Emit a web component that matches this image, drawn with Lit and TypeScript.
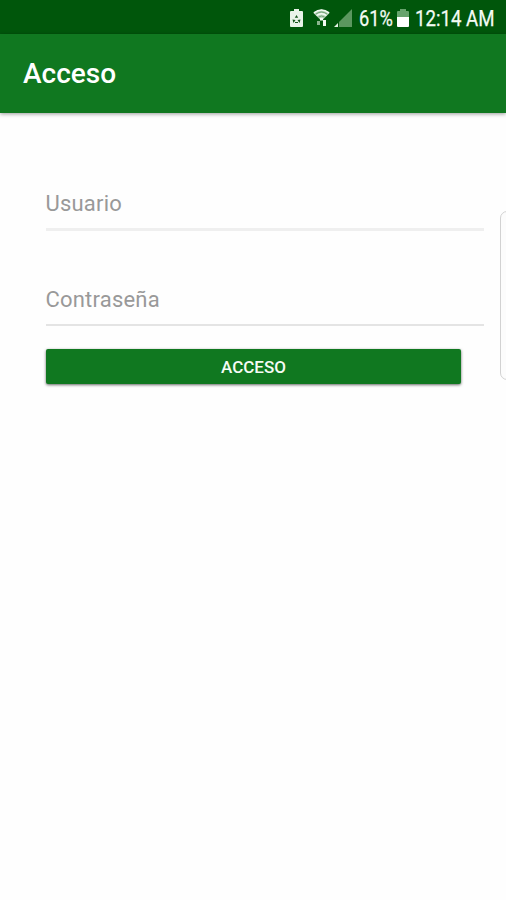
import { LitElement, html, css } from "lit";
import { customElement, property } from "lit/decorators.js";

@customElement("status-bar")
class StatusBar extends LitElement {
  static styles = css`
    :host {
      display: flex;
      justify-content: flex-end;
      align-items: center;
      box-sizing: border-box;
      height: 34px;
      padding: 2px 12px 0 0;
      background: #00560b;
      color: #f4fbf4;
      font: 400 21.5px/30px Roboto, sans-serif;
      -webkit-text-stroke: 0.25px #f4fbf4;
    }
    svg { display: block; flex: none; }
    .saver { margin-right: 10px; }
    .wifi { margin-right: 4px; }
    .signal { margin-right: 7px; }
    .percent, .clock {
      padding-top: 2px;
      white-space: nowrap;
      transform-origin: left center;
    }
    .percent { width: 34px; transform: scaleX(0.85); }
    .battery { margin: 0 6px 0 4px; }
    .clock { width: 79px; transform: scaleX(0.868); }
  `;

  render() {
    return html`
      <svg class="saver" width="13" height="19" viewBox="0 0 13 19">
        <path fill="#e9f3e9" d="M4 0h5v2h3q1 0 1 1v14q0 1-1 1H1q-1 0-1-1V3q0-1 1-1h3z" />
        <path fill="#17551d" d="M6.500 6l1.700 2.700H4.800zM2.500 10.500l3 .5-2 3zM10.500 10.500l-3 .5 2 3zM5 13h3v1H5z" />
      </svg>
      <svg class="wifi" width="17" height="19" viewBox="0 0 17 19">
        <path fill="#b9d5bb" d="M.5 4Q8.500-3 16.500 4L9.500 11h-2z" />
        <g fill="none" stroke="#f3faf3" stroke-width="1.500">
          <path d="M.9 3.800Q8.500-2 16.100 3.800" />
          <path d="M3.500 6.500Q8.500 2.800 13.500 6.500" />
        </g>
        <path fill="none" stroke="#5c9260" stroke-width=".8" d="M3 5Q8.500 1 14 5M5.500 8q3-2 6 0" />
        <path fill="#8bb48e" d="M4 12h3v4H4z" />
        <path fill="#f3faf3" d="M10 11h3v6h-3zM7 9h3v2.500H7z" />
      </svg>
      <svg class="signal" width="18" height="18" viewBox="0 0 18 18">
        <path fill="#5b975f" d="M18 0v18H5v-5z" />
        <path fill="#e5f2e5" d="M4 14v4H0z" />
      </svg>
      <span class="percent">61%</span>
      <svg class="battery" width="12" height="18" viewBox="0 0 12 18">
        <path fill="#67a36d" d="M3 0h6v2h2q1 0 1 1v5H0V3q0-1 1-1h2z" />
        <path fill="#fff" d="M0 8h12v9q0 1-1 1H1q-1 0-1-1z" />
      </svg>
      <span class="clock">12:14 AM</span>
    `;
  }
}

@customElement("text-field")
class TextField extends LitElement {
  @property() label = "";

  static styles = css`
    :host {
      display: block;
      box-sizing: border-box;
      height: 43px;
      padding-top: 1px;
      border-bottom: 2px solid #e4e4e4;
      color: #999;
      font: 400 22px/32px Roboto, sans-serif;
      letter-spacing: 0.2px;
    }
    :host(.soft) { height: 44px; border-bottom: 3px solid #efefef; }
    .label { margin-left: -0.5px; }
  `;

  render() {
    return html`<span class="label">${this.label}</span>`;
  }
}

@customElement("app-root")
class AppRoot extends LitElement {
  static styles = css`
    :host {
      display: block;
      position: relative;
      height: 900px;
      overflow: hidden;
      background: #fefefe;
      font-family: Roboto, sans-serif;
    }
    .bar {
      display: flex;
      align-items: center;
      box-sizing: border-box;
      height: 79px;
      padding: 0 23px;
      background: #107820;
      color: #fff;
      font-size: 28px;
      font-weight: 500;
      box-shadow: 0 1px 4px rgba(0, 0, 0, 0.4);
    }
    .form {
      display: flex;
      flex-direction: column;
      padding: 74px 22px 0 46px;
    }
    .second { margin-top: 52px; }
    .submit {
      height: 35px;
      margin: 23px 23px 0 0;
      padding: 2px 0 0;
      border: 0;
      border-radius: 2px;
      background: #107820;
      color: #f5fbf5;
      font: 500 17px/33px Roboto, sans-serif;
      text-align: center;
      box-shadow: 0 1px 3px rgba(0, 0, 0, 0.6);
    }
    .edge {
      position: absolute;
      top: 211px;
      right: -12px;
      box-sizing: border-box;
      width: 18px;
      height: 169px;
      border: 1px solid #d2d2d2;
      border-radius: 7px;
      background: #fcfcfc;
    }
  `;

  render() {
    return html`
      <status-bar></status-bar>
      <header class="bar">Acceso</header>
      <main class="form">
        <text-field class="soft" label="Usuario"></text-field>
        <text-field class="second" label="Contraseña"></text-field>
        <button class="submit">ACCESO</button>
      </main>
      <div class="edge"></div>
    `;
  }
}
